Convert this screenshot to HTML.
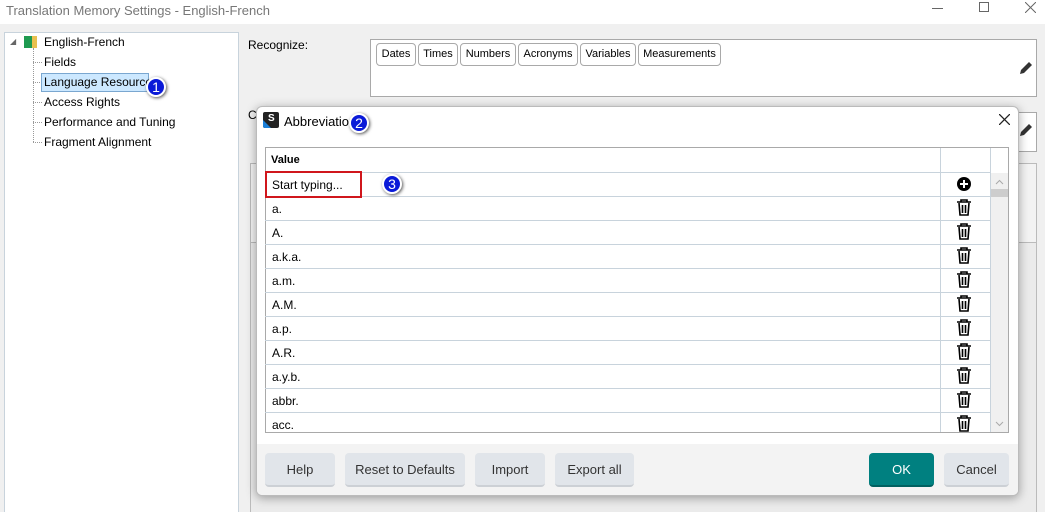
<!DOCTYPE html>
<html style="width:1045px;height:512px;overflow:hidden"><head><meta charset="utf-8"><style>
*{box-sizing:border-box;margin:0;padding:0}
body{width:1045px;height:512px;overflow:hidden;background:#f0f0f0;font-family:"Liberation Sans",sans-serif;font-size:12px;color:#000;position:relative}
.a{position:absolute}
.chip{position:absolute;top:43px;height:23px;border:1px solid #a9a9a9;border-radius:4px;background:#fff;font-size:11px;line-height:21px;text-align:center}
.row{position:absolute;left:265px;width:725px;height:24px;border-top:1px solid #c8d3dc;font-size:12px;line-height:25px;padding-left:7px}
.btn{position:absolute;top:453px;height:34px;background:#e1e5ea;border-radius:4px;border-bottom:2px solid #ccd0d5;font-size:13px;line-height:33px;text-align:center;color:#333}
</style></head><body>
<div class="a" style="left:0;top:0;width:1045px;height:24px;background:#fff"></div>
<div class="a" style="left:6px;top:3px;font-size:13px;color:#777">Translation Memory Settings - English-French</div>
<div class="a" style="left:932px;top:8px;width:11px;height:1px;background:#666"></div>
<div class="a" style="left:979px;top:2px;width:10px;height:10px;border:1px solid #666"></div>
<svg class="a" style="left:1025px;top:2px" width="11" height="11"><path d="M0 0L11 11M11 0L0 11" stroke="#666" stroke-width="1"/></svg>
<!-- tree panel -->
<div class="a" style="left:4px;top:32px;width:235px;height:490px;background:#fff;border:1px solid #c8d3dc"></div>
<div class="a" style="left:10px;top:37px;font-size:8px;color:#666">◢</div>
<div class="a" style="left:24px;top:36px;width:8px;height:12px;background:#1e9a50"></div>
<div class="a" style="left:32px;top:36px;width:5px;height:12px;background:#e8c050"></div>
<div class="a" style="left:44px;top:35px">English-French</div>
<div class="a" style="left:33px;top:48px;width:1px;height:94px;border-left:1px dotted #999"></div>
<div class="a" style="left:33px;top:62px;width:9px;border-top:1px dotted #999"></div>
<div class="a" style="left:33px;top:82px;width:9px;border-top:1px dotted #999"></div>
<div class="a" style="left:33px;top:102px;width:9px;border-top:1px dotted #999"></div>
<div class="a" style="left:33px;top:122px;width:9px;border-top:1px dotted #999"></div>
<div class="a" style="left:33px;top:142px;width:9px;border-top:1px dotted #999"></div>
<div class="a" style="left:44px;top:55px">Fields</div>
<div class="a" style="left:41px;top:73px;width:108px;height:19px;background:#cce8ff;border:1px solid #7aa7d0"></div>
<div class="a" style="left:44px;top:75px">Language Resources</div>
<div class="a" style="left:44px;top:95px">Access Rights</div>
<div class="a" style="left:44px;top:115px">Performance and Tuning</div>
<div class="a" style="left:44px;top:135px">Fragment Alignment</div>
<!-- right -->
<div class="a" style="left:248px;top:38px">Recognize:</div>
<div class="a" style="left:248px;top:108px">C</div>
<div class="a" style="left:370px;top:39px;width:667px;height:58px;background:#fff;border:1px solid #a9a9a9"></div>
<div class="chip" style="left:376px;width:40px">Dates</div>
<div class="chip" style="left:418px;width:40px">Times</div>
<div class="chip" style="left:460px;width:56px">Numbers</div>
<div class="chip" style="left:518px;width:60px">Acronyms</div>
<div class="chip" style="left:580px;width:56px">Variables</div>
<div class="chip" style="left:638px;width:83px">Measurements</div>
<svg class="a" style="left:1019px;top:61px" width="14" height="14"><path d="M1 13l1-4 8-8 3 3-8 8z" fill="#333"/></svg>
<div class="a" style="left:1010px;top:112px;width:27px;height:40px;background:#fff;border:1px solid #a9a9a9"></div>
<svg class="a" style="left:1019px;top:123px" width="14" height="14"><path d="M1 13l1-4 8-8 3 3-8 8z" fill="#333"/></svg>
<div class="a" style="left:250px;top:163px;width:787px;height:360px;border:1px solid #bbb;background:#ebebeb"></div>
<div class="a" style="left:250px;top:163px;width:787px;height:80px;background:#f3f3f3;border:1px solid #bbb"></div>
<!-- dialog -->
<div class="a" style="left:256px;top:106px;width:763px;height:390px;background:#fff;border:1px solid #bbb;border-radius:6px;box-shadow:0 2px 10px rgba(0,0,0,.35);overflow:hidden">
 <div class="a" style="left:0;top:337px;width:763px;height:60px;background:#f3f3f3"></div>
</div>
<div class="a" style="left:263px;top:112px;width:16px;height:16px;background:#222;border-radius:2px;overflow:hidden"><div class="a" style="left:0;top:8px;width:0;height:0;border-left:8px solid #1a7fd8;border-top:8px solid transparent"></div><div class="a" style="left:5px;top:1px;color:#fff;font-size:10px;font-weight:bold">S</div></div>
<div class="a" style="left:284px;top:114px;font-size:13px">Abbreviation</div>
<svg class="a" style="left:999px;top:114px" width="11" height="11"><path d="M0 0L11 11M11 0L0 11" stroke="#222" stroke-width="1.3"/></svg>
<div class="a" style="left:265px;top:147px;width:744px;height:286px;border:1px solid #a9a9a9;background:#fff;overflow:hidden"></div>
<div class="a" style="left:271px;top:154px;font-weight:bold;font-size:11px">Value</div>
<div class="row" style="top:172px">Start typing...</div>
<div class="row" style="top:196px">a.</div>
<div class="row" style="top:220px">A.</div>
<div class="row" style="top:244px">a.k.a.</div>
<div class="row" style="top:268px">a.m.</div>
<div class="row" style="top:292px">A.M.</div>
<div class="row" style="top:316px">a.p.</div>
<div class="row" style="top:340px">A.R.</div>
<div class="row" style="top:364px">a.y.b.</div>
<div class="row" style="top:388px">abbr.</div>
<div class="row" style="top:412px;height:20px">acc.</div>
<div class="a" style="left:940px;top:148px;width:1px;height:284px;background:#c8d3dc"></div>
<div class="a" style="left:990px;top:148px;width:1px;height:284px;background:#c8d3dc"></div>
<div class="a" style="left:991px;top:173px;width:17px;height:259px;background:#f0f0f0"></div>
<div class="a" style="left:991px;top:189px;width:17px;height:8px;background:#cdcdcd"></div>
<svg class="a" style="left:995px;top:179px" width="9" height="6"><path d="M1 5L4.5 1.5 8 5" stroke="#aaa" fill="none"/></svg>
<svg class="a" style="left:995px;top:421px" width="9" height="6"><path d="M1 1L4.5 4.5 8 1" stroke="#aaa" fill="none"/></svg>
<div class="a" style="left:957px;top:177px;width:14px;height:14px;border-radius:50%;background:#000"></div>
<div class="a" style="left:963px;top:180px;width:2px;height:8px;background:#fff"></div>
<div class="a" style="left:960px;top:183px;width:8px;height:2px;background:#fff"></div>
<svg class="a" style="left:956px;top:199px" width="16" height="234" viewBox="0 0 16 234">
<defs><g id="t" fill="none" stroke="#000" stroke-width="1.6"><path d="M1 3h14M5 3V1h6v2M3 4l1 12h8l1-12M6.5 6v8M9.5 6v8"/></g></defs>
<use href="#t" y="0"/><use href="#t" y="24"/><use href="#t" y="48"/><use href="#t" y="72"/><use href="#t" y="96"/><use href="#t" y="120"/><use href="#t" y="144"/><use href="#t" y="168"/><use href="#t" y="192"/><use href="#t" y="216"/>
</svg>
<div class="a" style="left:265px;top:171px;width:97px;height:27px;border:2px solid #d0161c"></div>
<div class="btn" style="left:265px;width:70px">Help</div>
<div class="btn" style="left:345px;width:120px">Reset to Defaults</div>
<div class="btn" style="left:475px;width:70px">Import</div>
<div class="btn" style="left:555px;width:79px">Export all</div>
<div class="btn" style="left:869px;width:65px;background:#008080;border-bottom-color:#006060;color:#fff">OK</div>
<div class="btn" style="left:944px;width:65px">Cancel</div>
<div class="a" style="left:146px;top:77px;width:20px;height:20px;border-radius:50%;background:#0a1ad8;border:2px solid #fff;box-shadow:1px 1px 3px #555;color:#fff;font-size:14px;text-align:center;line-height:16px">1</div>
<div class="a" style="left:349px;top:113px;width:20px;height:20px;border-radius:50%;background:#0a1ad8;border:2px solid #fff;box-shadow:1px 1px 3px #555;color:#fff;font-size:14px;text-align:center;line-height:16px">2</div>
<div class="a" style="left:382px;top:174px;width:20px;height:20px;border-radius:50%;background:#0a1ad8;border:2px solid #fff;box-shadow:1px 1px 3px #555;color:#fff;font-size:14px;text-align:center;line-height:16px">3</div>
</body></html>
